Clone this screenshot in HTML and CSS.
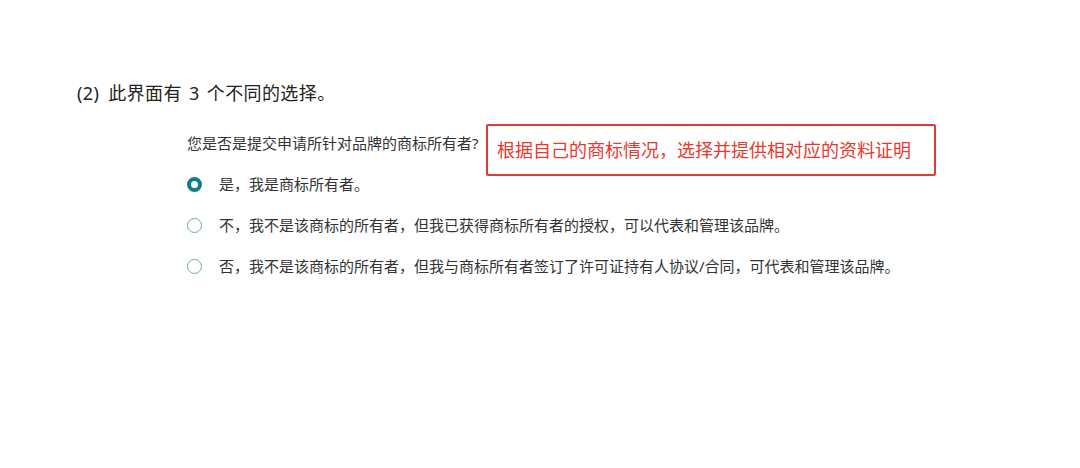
FILE: index.html
```html
<!DOCTYPE html>
<html lang="zh-CN">
<head>
  <meta charset="UTF-8">
  <meta name="viewport" content="width=device-width, initial-scale=1">
  <title>商标所有者选择</title>
  <link rel="stylesheet" href="styles.css">
</head>
<body>
  <div class="page">
    <h1 class="step-title">(2)<span class="gap"></span>此界面有 3 个不同的选择。</h1>

    <div class="owner-form">
      <p class="question">您是否是提交申请所针对品牌的商标所有者?</p>

      <div class="note-box">根据自己的商标情况，选择并提供相对应的资料证明</div>

      <label class="option">
        <span class="radio checked"></span>
        <span>是，我是商标所有者。</span>
      </label>
      <label class="option">
        <span class="radio"></span>
        <span>不，我不是该商标的所有者，但我已获得商标所有者的授权，可以代表和管理该品牌。</span>
      </label>
      <label class="option">
        <span class="radio"></span>
        <span>否，我不是该商标的所有者，但我与商标所有者签订了许可证持有人协议/合同，可代表和管理该品牌。</span>
      </label>
    </div>
  </div>
</body>
</html>
```

FILE: styles.css
```css
body {
  margin: 0;
  background: #ffffff;
  color: #333333;
  font-family: "Noto Sans", "Noto Sans CJK SC", sans-serif;
}

.page {
  padding: 81px 0 0 77px;
}

.step-title {
  margin: 0;
  font-size: 18px;
  font-weight: normal;
  line-height: 24px;
  letter-spacing: 0.4px;
  word-spacing: 2px;
  color: #222222;
}

.step-title .gap {
  display: inline-block;
  width: 9px;
}

.owner-form {
  position: relative;
  margin: 28px 0 0 110px;
  font-size: 15px;
  line-height: 20px;
  color: #333333;
}

.question {
  margin: 0;
}

.option {
  display: flex;
  align-items: center;
  gap: 17px;
  margin-top: 21px;
}

.radio {
  width: 15px;
  height: 15px;
  box-sizing: border-box;
  border: 1.6px solid #6aa9b0;
  border-radius: 50%;
  flex-shrink: 0;
}

.radio.checked {
  border: 4.5px solid #0b7f87;
}

/* red annotation laid over the form */
.note-box {
  position: absolute;
  left: 299px;
  top: -9px;
  width: 450px;
  height: 52px;
  box-sizing: border-box;
  border: 2px solid #e53935;
  border-radius: 2px;
  padding-left: 9px;
  display: flex;
  align-items: center;
  font-size: 18px;
  color: #e8392f;
}
```
